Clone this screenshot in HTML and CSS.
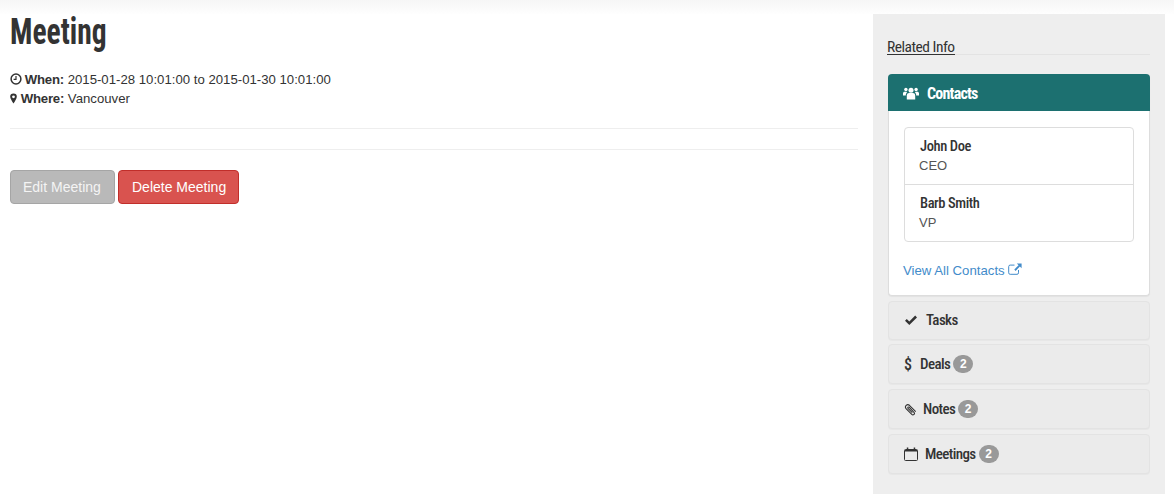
FILE: index.html
```html
<!DOCTYPE html>
<html lang="en">
<head>
<meta charset="utf-8">
<title>Meeting</title>
<link rel="stylesheet" href="styles.css">
</head>
<body>
<div class="topbar"></div>
<div class="layout">
  <main class="main">
    <h1 class="title">Meeting</h1>
    <p class="meta"><svg class="ic-meta" viewBox="0 0 12 12"><circle cx="6" cy="6" r="4.900" fill="none" stroke="#333" stroke-width="1.500"/><path d="M6 3v3.300H3.600" fill="none" stroke="#333" stroke-width="1.200"/></svg> <b>When:</b> 2015-01-28 10:01:00 to 2015-01-30 10:01:00</p>
    <p class="meta"><svg class="ic-pin" viewBox="0 0 8 12"><path fill="#333" fill-rule="evenodd" d="M4 .3A3.800 3.800 0 0 0 .2 4.100C.2 6 2.600 9.900 4 11.700 5.400 9.900 7.800 6 7.800 4.100A3.800 3.800 0 0 0 4 .3zM4 2.500a1.600 1.600 0 1 1 0 3.200 1.600 1.600 0 0 1 0-3.200z"/></svg> <b>Where:</b> Vancouver</p>
    <hr class="rule">
    <hr class="rule">
    <div class="actions">
      <a class="btn btn-edit">Edit Meeting</a>
      <a class="btn btn-delete">Delete Meeting</a>
    </div>
  </main>
  <aside class="side">
    <h4 class="side-title"><span>Related Info</span></h4>
    <section class="panel panel-open">
      <header class="panel-head">
        <svg class="ic-users" viewBox="0 0 16 13"><g fill="#fff"><circle cx="8" cy="3.200" r="2.500"/><circle cx="2.900" cy="2.500" r="1.700"/><circle cx="13.100" cy="2.500" r="1.700"/><path d="M3.800 12.500V8.600C3.800 6.800 5 6 6 6h4c1 0 2.200.8 2.200 2.600v3.900z"/><path d="M0 8.400V6.300C0 5.200.8 4.700 1.500 4.700h2c.3.300.4.500.6.700C3.200 6 2.800 7 2.800 8.400zM16 8.400V6.300c0-1.100-.8-1.600-1.500-1.600h-2c-.3.300-.4.500-.6.700.9.600 1.300 1.600 1.300 3z"/></g></svg>
        <span>Contacts</span>
      </header>
      <div class="panel-body">
        <ul class="people">
          <li><strong>John Doe</strong><span>CEO</span></li>
          <li><strong>Barb Smith</strong><span>VP</span></li>
        </ul>
        <a class="more">View All Contacts <svg class="ic-ext" viewBox="0 0 14 12"><path d="M10.500 7v2.800a1.500 1.500 0 0 1-1.500 1.500H2.200A1.500 1.500 0 0 1 .7 9.800V3.600a1.500 1.500 0 0 1 1.500-1.500h4.300" fill="none" stroke="#428bca" stroke-width="1"/><path d="M8.800.4h4.800v4.800l-1.700-1.700-4.300 4.400-1.300-1.300 4.300-4.400z" fill="#428bca"/></svg></a>
      </div>
    </section>
    <section class="panel panel-closed p-tasks">
      <svg class="ic-check" viewBox="0 0 14 11"><path d="M1 5.800l1.800-1.800 2.500 2.500L11.200.6 13 2.400 5.300 10.100z" fill="#333"/></svg>
      <span class="label">Tasks</span>
    </section>
    <section class="panel panel-closed p-deals">
      <span class="dollar">$</span>
      <span class="label">Deals</span><span class="badge">2</span>
    </section>
    <section class="panel panel-closed p-notes">
      <svg class="ic-clip" viewBox="0 0 12 12"><path d="M10.800 7.900L5 2.100a2.200 2.200 0 0 0-3.100 3.100l5.300 5.400a1.400 1.400 0 0 0 2-2L4.700 3.900a.7.7 0 0 0-1 1l4 4" fill="none" stroke="#333" stroke-width="1"/></svg>
      <span class="label">Notes</span><span class="badge">2</span>
    </section>
    <section class="panel panel-closed p-meetings">
      <svg class="ic-cal" viewBox="0 0 14 14"><path d="M1.500 2.500h11a1 1 0 0 1 1 1v9a1 1 0 0 1-1 1h-11a1 1 0 0 1-1-1v-9a1 1 0 0 1 1-1z" fill="none" stroke="#333" stroke-width="1"/><path d="M1 3h12v1.500H1z" fill="#333"/><path d="M2.800.5h1.500v3H2.800zM9.700.5h1.500v3H9.700z" fill="#333"/></svg>
      <span class="label">Meetings</span><span class="badge">2</span>
    </section>
  </aside>
</div>
</body>
</html>
```
FILE: styles.css
```css
* { box-sizing: border-box; }
html, body { margin: 0; padding: 0; }
body {
  height: 504px;
  overflow: hidden;
  background: #fff;
  color: #333;
  font-family: "Liberation Sans", Arial, sans-serif;
  font-size: 13.2px;
  line-height: 19px;
}
.topbar {
  height: 14px;
  background: linear-gradient(#f6f6f6, #fefefe);
}
.layout {
  display: flex;
  align-items: flex-start;
  padding-right: 9px;
}
.main {
  flex: 1;
  padding: 0 15px 0 10px;
}
.title {
  margin: 0 0 20px;
  width: max-content;
  font-family: "Roboto Condensed", sans-serif;
  font-size: 36px;
  line-height: 36px;
  font-weight: 700;
  color: #333;
  transform: scaleX(.82);
  transform-origin: left center;
}
.meta { margin: 0; }
.meta b { font-weight: 700; letter-spacing: -.2px; }
.ic-meta { width: 12px; height: 12px; margin-right: -1px; vertical-align: -1px; }
.ic-pin { width: 7px; height: 11px; vertical-align: -1px; }
.rule { margin: 20px 0 0; border: 0; border-top: 1px solid #eee; }
.actions {
  display: flex;
  gap: 3px;
  margin-top: 20px;
}
.btn {
  display: block;
  height: 34px;
  padding: 0 0 0 12px;
  border: 1px solid;
  border-radius: 4px;
  color: #fff;
  font-size: 14px;
  line-height: 32px;
  white-space: nowrap;
}
.btn-edit { width: 105px; background: #b9b9b9; border-color: #a5a5a5; color: #f4f4f4; }
.btn-delete { width: 121px; padding-left: 13px; background: #d9534f; border-color: #c12e2a; }
.side {
  width: 292px;
  height: 480px;
  flex: none;
  padding: 0 15px 0 14px;
  background: #eee;
}
.side-title {
  margin: 24px 0 19px;
  height: 17px;
  border-bottom: 1px solid #e3e3e3;
  font-family: "Roboto Condensed", sans-serif;
  font-size: 15.5px;
  line-height: 18px;
  font-weight: 400;
  letter-spacing: -.5px;
}
.side-title span {
  display: inline-block;
  height: 17px;
  border-bottom: 1px solid #333;
}
.panel {
  margin: 0 0 5px 1px;
  border-radius: 4px;
}
.panel-open {
  height: 222px;
  background: #fff;
  border: 1px solid #ddd;
  border-width: 0 1px 1px;
  box-shadow: 0 1px 1px rgba(0,0,0,.05);
}
.panel-head {
  display: flex;
  align-items: center;
  gap: 8px;
  height: 37px;
  margin: 0 -1px;
  padding: 1px 0 0 15px;
  background: #1c7070;
  border-radius: 4px 4px 0 0;
  color: #fff;
  font-family: "Roboto Condensed", sans-serif;
  font-size: 16px;
  font-weight: 700;
  letter-spacing: -.8px;
}
.ic-users { width: 16px; height: 13px; }
.panel-body { padding: 16px 15px 0; }
.people {
  list-style: none;
  margin: 0;
  padding: 0;
  border: 1px solid #ddd;
  border-radius: 4px;
}
.people li {
  display: flex;
  flex-direction: column;
  height: 56px;
  padding: 9px 15px 0 14px;
}
.people li + li { height: 57px; border-top: 1px solid #ddd; }
.people strong {
  margin-left: 1px;
  font-family: "Roboto Condensed", sans-serif;
  font-size: 14.5px;
  line-height: 19px;
  font-weight: 500;
  letter-spacing: -.4px;
}
.people span { font-size: 13px; line-height: 19px; color: #555; }
.more {
  display: block;
  margin-top: 19px;
  margin-left: -1px;
  color: #428bca;
  font-size: 13.2px;
}
.ic-ext { width: 14px; height: 12px; vertical-align: 0; }
.panel-closed {
  display: flex;
  align-items: center;
  height: 40px;
  padding-left: 15px;
  background: #ebebeb;
  border: 1px solid #e3e3e3;
  box-shadow: 0 1px 1px rgba(0,0,0,.03);
  font-family: "Roboto Condensed", sans-serif;
  font-size: 15px;
}
.p-tasks { height: 39px; margin-bottom: 4px; }
.label { font-weight: 500; color: #333; letter-spacing: -.6px; }
.badge {
  display: block;
  width: 20px;
  height: 18px;
  margin-left: 3px;
  border-radius: 10px;
  background: #999;
  color: #fff;
  font-family: "Liberation Sans", sans-serif;
  font-size: 12px;
  font-weight: 700;
  line-height: 18px;
  text-align: center;
}
.ic-check { width: 14px; height: 11px; margin-right: 8px; }
.dollar { width: 8px; margin-right: 8px; font-size: 16px; font-weight: 500; }
.ic-clip { width: 13px; height: 13px; margin-right: 6px; }
.ic-cal { width: 14px; height: 14px; margin-right: 7px; }
```
